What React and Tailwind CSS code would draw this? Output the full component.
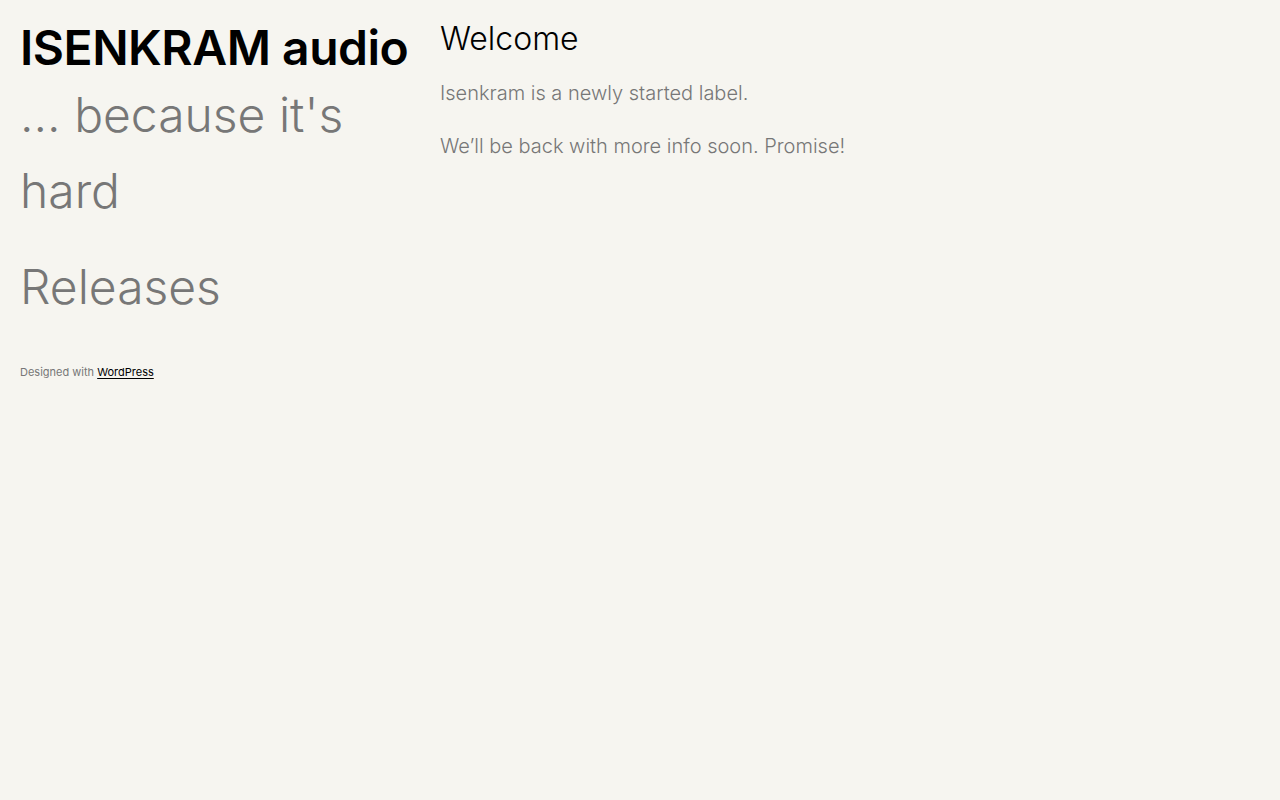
export default function App() {
  return (
    <div
      className="min-h-screen bg-[#f6f5f0] text-black"
      style={{ fontFamily: 'Inter, "Noto Sans", sans-serif' }}
    >
      <div className="flex">
        <header className="w-[420px] shrink-0 pl-5 pr-3 pt-[19px]">
          <h1 className="whitespace-nowrap text-[48px] font-semibold leading-[1.2] tracking-[-0.01em]">
            <a href="#">ISENKRAM audio</a>
          </h1>
          <p className="text-[48px] font-light leading-[1.6] text-[#777777]">
            ... because it's hard
          </p>
          <nav className="mt-[19px]">
            <a href="#" className="block text-[48px] font-light leading-[1.6] text-[#777777]">
              Releases
            </a>
          </nav>
          <p className="mt-[38px] text-[11px] text-[#777777]">
            Designed with{' '}
            <a href="#" className="text-black underline underline-offset-2">
              WordPress
            </a>
          </p>
        </header>

        <main className="pt-[20px] pl-5">
          <h2 className="text-[32px] leading-[1.2] font-light">Welcome</h2>
          <div className="mt-[19px] space-y-[21px] text-[20px] font-light leading-[1.6] text-[#777777]">
            <p>Isenkram is a newly started label.</p>
            <p>We’ll be back with more info soon. Promise!</p>
          </div>
        </main>
      </div>
    </div>
  );
}
